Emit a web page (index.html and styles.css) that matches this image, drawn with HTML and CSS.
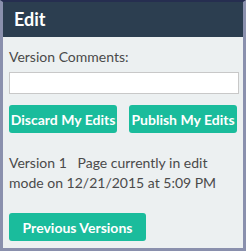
FILE: index.html
```html
<!DOCTYPE html>
<html lang="en">
<head>
    <meta charset="UTF-8">
    <title>Edit</title>
    <link rel="stylesheet" href="styles.css">
</head>
<body>
    <div class="paneel">
        <div class="kop">Edit</div>
        <div class="inhoud">
            <label class="label" for="opmerking">Version Comments:</label>
            <input class="veld" id="opmerking" type="text">
            <div class="knoppen">
                <button class="knop">Discard My Edits</button>
                <button class="knop">Publish My Edits</button>
            </div>
            <p class="status">Version 1&nbsp;&nbsp; Page currently in edit mode on 12/21/2015 at 5:09 PM</p>
            <button class="knop breed">Previous Versions</button>
        </div>
    </div>
</body>
</html>
```

FILE: styles.css
```css
html, body {
    margin: 0;
    padding: 0;
}

body {
    font-family: Lato, "Liberation Sans", sans-serif;
    color: #4a4a4a;
}

.paneel {
    width: 246px;
    height: 251px;
    box-sizing: border-box;
    border: 3px solid #8a90ad;
    border-top: 2px solid #262e50;
    background: #ecf0f1;
}

.kop {
    height: 35px;
    line-height: 35px;
    background: #2c3e50;
    color: #fff;
    font-size: 18px;
    font-weight: bold;
    padding-left: 11px;
}

.inhoud {
    padding: 11px 6px 0 6px;
}

.label {
    display: block;
    font-size: 14px;
    line-height: 17px;
}

.veld {
    display: block;
    box-sizing: border-box;
    width: 230px;
    height: 22px;
    margin: 7px 0 0 0;
    border: 1px solid #c8c8c8;
    background: #fff;
}

.knoppen {
    display: flex;
    gap: 12px;
    margin-top: 11px;
}

.knop {
    height: 28px;
    width: 109px;
    padding: 0;
    border: none;
    border-radius: 3px;
    background: #1abc9c;
    color: #fff;
    font-family: Lato, "Liberation Sans", sans-serif;
    font-size: 14px;
    font-weight: bold;
}

.knop.breed {
    width: 137px;
}

.status {
    font-size: 14px;
    line-height: 20px;
    margin: 20px 0 20px 0;
}
```
